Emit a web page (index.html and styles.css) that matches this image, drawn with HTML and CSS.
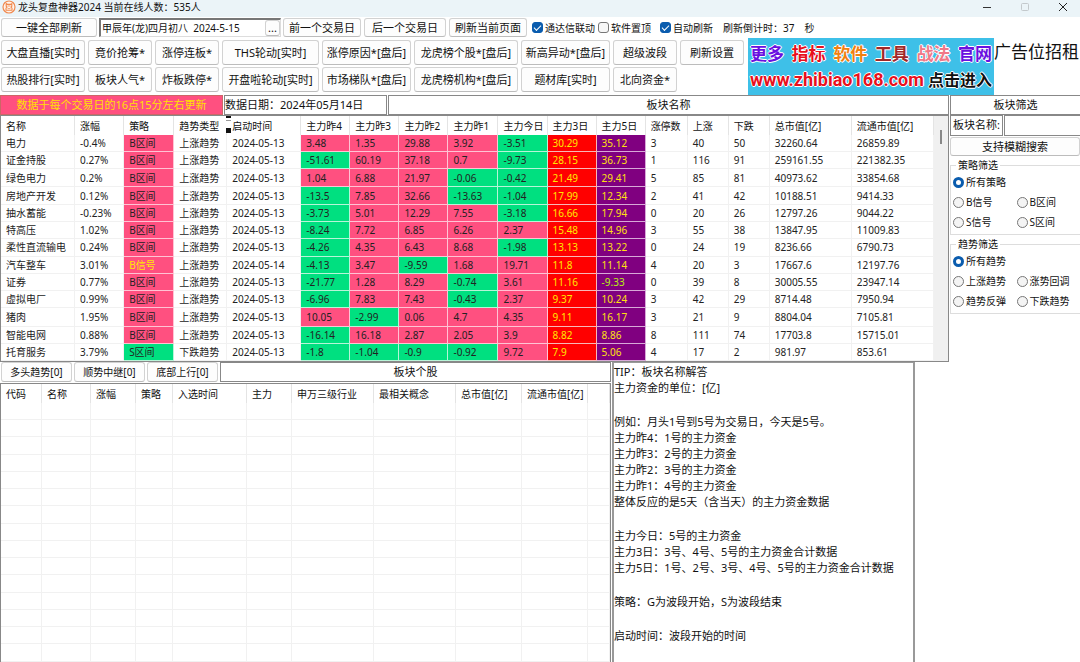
FILE: index.html
```html
<!DOCTYPE html>
<html lang="zh-CN">
<head>
<meta charset="utf-8">
<title>龙头复盘神器2024</title>
<link rel="stylesheet" href="styles.css">
</head>
<body>
<header class="titlebar">
  <svg class="logo" viewBox="0 0 14 14" aria-hidden="true"><circle cx="7" cy="7" r="6" fill="#fff3ea" stroke="#f08a50" stroke-width="1.2"/><path d="M4.2 3.6 5.6 4.4H8.4L9.8 3.6V6.2L9 7.2 10 8.2V10.2H4V8.2L5 7.2 4.2 6.2Z" fill="none" stroke="#f08a50" stroke-width="1.1"/><path d="M5.6 6H8.4M5.6 8.6H8.4" stroke="#f08a50" stroke-width=".8"/></svg>
  <h1>龙头复盘神器2024 当前在线人数：535人</h1>
  <div class="winctl">
    <button aria-label="最小化"><svg viewBox="0 0 10 10"><path d="M1 5.5H9" stroke="#333"/></svg></button>
    <button aria-label="最大化" disabled><svg viewBox="0 0 10 10"><rect x="1.5" y="1.5" width="7" height="7" rx="1" fill="none" stroke="#c3c9cc"/></svg></button>
    <button aria-label="关闭"><svg viewBox="0 0 10 10"><path d="M1 1 9 9M9 1 1 9" stroke="#222"/></svg></button>
  </div>
</header>

<section class="quick">
  <button class="btn w96">一键全部刷新</button>
  <div class="datebox"><input type="text" aria-label="日期" value="甲辰年(龙)四月初八  2024-5-15"><button class="btn" aria-label="选择日期">...</button></div>
  <button class="btn w78">前一个交易日</button>
  <button class="btn w82">后一个交易日</button>
  <button class="btn w78">刷新当前页面</button>
  <div class="checks">
    <label><input type="checkbox" checked>通达信联动</label>
    <label class="mid"><input type="checkbox">软件置顶</label>
    <label><input type="checkbox" checked>自动刷新</label>
    <span class="count">刷新倒计时：<b>37</b>秒</span>
  </div>
</section>

<section class="tools">
  <nav class="toolgrid">
    <button class="btn">大盘直播[实时]</button><button class="btn">竟价抢筹*</button><button class="btn">涨停连板*</button><button class="btn">THS轮动[实时]</button><button class="btn">涨停原因*[盘后]</button><button class="btn">龙虎榜个股*[盘后]</button><button class="btn">新高异动*[盘后]</button><button class="btn">超级波段</button><button class="btn">刷新设置</button>
    <button class="btn">热股排行[实时]</button><button class="btn">板块人气*</button><button class="btn">炸板跌停*</button><button class="btn">开盘啦轮动[实时]</button><button class="btn">市场梯队*[盘后]</button><button class="btn">龙虎榜机构*[盘后]</button><button class="btn">题材库[实时]</button><button class="btn">北向资金*</button>
  </nav>
  <a class="banner" href="#">
    <span class="words"><span class="c1">更多</span><span class="c2">指标</span><span class="c3">软件</span><span class="c4">工具</span><span class="c5">战法</span><span class="c1">官网</span></span>
    <span class="site"><span class="url">www.zhibiao168.com</span><span class="enter">点击进入</span></span>
  </a>
  <span class="ad">广告位招租</span>
</section>

<main class="upper">
  <div class="left">
    <div class="caption">
      <div class="notice">数据于每个交易日的16点15分左右更新</div>
      <div class="box date">数据日期：2024年05月14日</div>
      <h2 class="box grow">板块名称</h2>
    </div>
    <div class="scroller">
    <table class="grid sectors">
      <colgroup><col class="k74"><col class="k49"><col class="k50"><col class="k53"><col class="k74"><col class="k49"><col class="k49"><col class="k49"><col class="k50"><col class="k49"><col class="k49"><col class="k49"><col class="k42"><col class="k41"><col class="k41"><col class="k82"><col class="k82"></colgroup>
      <thead><tr><th>名称</th><th>涨幅</th><th>策略</th><th>趋势类型</th><th class="drag">启动时间</th><th>主力昨4</th><th>主力昨3</th><th>主力昨2</th><th>主力昨1</th><th>主力今日</th><th>主力3日</th><th>主力5日</th><th>涨停数</th><th>上涨</th><th>下跌</th><th>总市值[亿]</th><th>流通市值[亿]</th></tr></thead>
      <tbody>
      <tr><td>电力</td><td>-0.4%</td><td>B区间</td><td>上涨趋势</td><td>2024-05-13</td><td>3.48</td><td>1.35</td><td>29.88</td><td>3.92</td><td class="n">-3.51</td><td>30.29</td><td>35.12</td><td>3</td><td>40</td><td>50</td><td>32260.64</td><td>26859.89</td></tr>
      <tr><td>证金持股</td><td>0.27%</td><td>B区间</td><td>上涨趋势</td><td>2024-05-13</td><td class="n">-51.61</td><td>60.19</td><td>37.18</td><td>0.7</td><td class="n">-9.73</td><td>28.15</td><td>36.73</td><td>1</td><td>116</td><td>91</td><td>259161.55</td><td>221382.35</td></tr>
      <tr><td>绿色电力</td><td>0.2%</td><td>B区间</td><td>上涨趋势</td><td>2024-05-13</td><td>1.04</td><td>6.88</td><td>21.97</td><td class="n">-0.06</td><td class="n">-0.42</td><td>21.49</td><td>29.41</td><td>5</td><td>85</td><td>81</td><td>40973.62</td><td>33854.68</td></tr>
      <tr><td>房地产开发</td><td>0.12%</td><td>B区间</td><td>上涨趋势</td><td>2024-05-13</td><td class="n">-13.5</td><td>7.85</td><td>32.66</td><td class="n">-13.63</td><td class="n">-1.04</td><td>17.99</td><td>12.34</td><td>2</td><td>41</td><td>42</td><td>10188.51</td><td>9414.33</td></tr>
      <tr><td>抽水蓄能</td><td>-0.23%</td><td>B区间</td><td>上涨趋势</td><td>2024-05-13</td><td class="n">-3.73</td><td>5.01</td><td>12.29</td><td>7.55</td><td class="n">-3.18</td><td>16.66</td><td>17.94</td><td>0</td><td>20</td><td>26</td><td>12797.26</td><td>9044.22</td></tr>
      <tr><td>特高压</td><td>1.02%</td><td>B区间</td><td>上涨趋势</td><td>2024-05-13</td><td class="n">-8.24</td><td>7.72</td><td>6.85</td><td>6.26</td><td>2.37</td><td>15.48</td><td>14.96</td><td>3</td><td>55</td><td>38</td><td>13847.95</td><td>11009.83</td></tr>
      <tr><td>柔性直流输电</td><td>0.24%</td><td>B区间</td><td>上涨趋势</td><td>2024-05-13</td><td class="n">-4.26</td><td>4.35</td><td>6.43</td><td>8.68</td><td class="n">-1.98</td><td>13.13</td><td>13.22</td><td>0</td><td>24</td><td>19</td><td>8236.66</td><td>6790.73</td></tr>
      <tr><td>汽车整车</td><td>3.01%</td><td class="signal">B信号</td><td>上涨趋势</td><td>2024-05-14</td><td class="n">-4.13</td><td>3.47</td><td class="n">-9.59</td><td>1.68</td><td>19.71</td><td>11.8</td><td>11.14</td><td>4</td><td>20</td><td>3</td><td>17667.6</td><td>12197.76</td></tr>
      <tr><td>证券</td><td>0.77%</td><td>B区间</td><td>上涨趋势</td><td>2024-05-13</td><td class="n">-21.77</td><td>1.28</td><td>8.29</td><td class="n">-0.74</td><td>3.61</td><td>11.16</td><td class="lime">-9.33</td><td>0</td><td>39</td><td>8</td><td>30005.55</td><td>23947.14</td></tr>
      <tr><td>虚拟电厂</td><td>0.99%</td><td>B区间</td><td>上涨趋势</td><td>2024-05-13</td><td class="n">-6.96</td><td>7.83</td><td>7.43</td><td class="n">-0.43</td><td>2.37</td><td>9.37</td><td>10.24</td><td>3</td><td>42</td><td>29</td><td>8714.48</td><td>7950.94</td></tr>
      <tr><td>猪肉</td><td>1.95%</td><td>B区间</td><td>上涨趋势</td><td>2024-05-13</td><td>10.05</td><td class="n">-2.99</td><td>0.06</td><td>4.7</td><td>4.35</td><td>9.11</td><td>16.17</td><td>3</td><td>21</td><td>9</td><td>8804.04</td><td>7105.81</td></tr>
      <tr><td>智能电网</td><td>0.88%</td><td>B区间</td><td>上涨趋势</td><td>2024-05-13</td><td class="n">-16.14</td><td>16.18</td><td>2.87</td><td>2.05</td><td>3.9</td><td>8.82</td><td>8.86</td><td>8</td><td>111</td><td>74</td><td>17703.8</td><td>15715.01</td></tr>
      <tr><td>托育服务</td><td>3.79%</td><td class="n">S区间</td><td>下跌趋势</td><td>2024-05-13</td><td class="n">-1.8</td><td class="n">-1.04</td><td class="n">-0.9</td><td class="n">-0.92</td><td>9.72</td><td>7.9</td><td>5.06</td><td>4</td><td>17</td><td>2</td><td>981.97</td><td>853.61</td></tr>
      </tbody>
    </table>
    <div class="track"><span class="thumb"></span></div>
    </div>
  </div>
  <aside class="filters">
    <h2 class="box">板块筛选</h2>
    <div class="search"><label class="box" for="q">板块名称:</label><input id="q" type="text"></div>
    <button class="btn fuzzy">支持模糊搜索</button>
    <fieldset>
      <legend>策略筛选</legend>
      <label class="all"><input type="radio" name="s" checked>所有策略</label>
      <label><input type="radio" name="s">B信号</label><label><input type="radio" name="s">B区间</label>
      <label><input type="radio" name="s">S信号</label><label><input type="radio" name="s">S区间</label>
    </fieldset>
    <fieldset>
      <legend>趋势筛选</legend>
      <label class="all"><input type="radio" name="t" checked>所有趋势</label>
      <label><input type="radio" name="t">上涨趋势</label><label><input type="radio" name="t">涨势回调</label>
      <label><input type="radio" name="t">趋势反弹</label><label><input type="radio" name="t">下跌趋势</label>
    </fieldset>
  </aside>
</main>

<section class="lower">
  <div class="stocks">
    <div class="tabs"><button class="btn">多头趋势[0]</button><button class="btn">顺势中继[0]</button><button class="btn">底部上行[0]</button><h2 class="box grow">板块个股</h2></div>
    <div class="scroller">
    <table class="grid">
      <colgroup><col class="k41"><col class="k49"><col class="k45"><col class="k37"><col class="k74"><col class="k45"><col class="k82"><col class="k82"><col class="k66"><col class="k66"><col class="k22"></colgroup>
      <thead><tr><th>代码</th><th>名称</th><th>涨幅</th><th>策略</th><th>入选时间</th><th>主力</th><th>申万三级行业</th><th>最相关概念</th><th>总市值[亿]</th><th>流通市值[亿]</th><th></th></tr></thead>
      <tbody>
      <tr><td><td><td><td><td><td><td><td><td><td><td></tr>
      <tr><td><td><td><td><td><td><td><td><td><td><td></tr>
      <tr><td><td><td><td><td><td><td><td><td><td><td></tr>
      <tr><td><td><td><td><td><td><td><td><td><td><td></tr>
      <tr><td><td><td><td><td><td><td><td><td><td><td></tr>
      <tr><td><td><td><td><td><td><td><td><td><td><td></tr>
      <tr><td><td><td><td><td><td><td><td><td><td><td></tr>
      <tr><td><td><td><td><td><td><td><td><td><td><td></tr>
      <tr><td><td><td><td><td><td><td><td><td><td><td></tr>
      <tr><td><td><td><td><td><td><td><td><td><td><td></tr>
      <tr><td><td><td><td><td><td><td><td><td><td><td></tr>
      <tr><td><td><td><td><td><td><td><td><td><td><td></tr>
      <tr><td><td><td><td><td><td><td><td><td><td><td></tr>
      <tr><td><td><td><td><td><td><td><td><td><td><td></tr>
      <tr><td><td><td><td><td><td><td><td><td><td><td></tr>
      </tbody>
    </table>
    </div>
  </div>
  <article class="tip">
    <p>TIP：板块名称解答<br>主力资金的单位：[亿]</p>
    <p>例如：月头1号到5号为交易日，今天是5号。<br>主力昨4：1号的主力资金<br>主力昨3：2号的主力资金<br>主力昨2：3号的主力资金<br>主力昨1：4号的主力资金<br>整体反应的是5天（含当天）的主力资金数据</p>
    <p>主力今日：5号的主力资金<br>主力3日：3号、4号、5号的主力资金合计数据<br>主力5日：1号、2号、3号、4号、5号的主力资金合计数据</p>
    <p>策略：G为波段开始，S为波段结束</p>
    <p>启动时间：波段开始的时间</p>
  </article>
</section>
</body>
</html>
```
FILE: styles.css
```css
* { box-sizing: border-box; }
body {
  margin: 0;
  height: 100vh;
  overflow: hidden;
  display: flex;
  flex-direction: column;
  background: #fff;
  color: #111;
  font: 11px/16px "Noto Sans", "Noto Sans CJK SC", sans-serif;
}
button, input { font: inherit; color: inherit; margin: 0; }
h1, h2, p { margin: 0; font-size: inherit; font-weight: normal; }

.titlebar {
  display: flex;
  align-items: center;
  height: 17px;
  padding: 0 12px 3px 2px;
  background: #ebf4f8;
  font-size: 10px;
  line-height: 14px;
}
.logo { width: 14px; height: 14px; margin-right: 2px; }
.winctl { display: flex; gap: 28px; margin-left: auto; }
.winctl button { width: 10px; height: 10px; padding: 0; border: 0; background: none; display: flex; }
.winctl svg { width: 10px; height: 10px; }

.btn {
  padding: 0;
  border: 1px solid #d2d2d2;
  border-bottom-color: #bcbcbc;
  border-radius: 3px;
  background: #fdfdfd;
  white-space: nowrap;
  text-align: center;
}

.quick { display: flex; gap: 2px; height: 21px; padding: 1px 1px 1px; flex: none; }
.w96 { width: 96px; }
.w78 { width: 78px; }
.w82 { width: 82px; margin: 0 1px; }
.datebox {
  display: flex;
  width: 182px;
  border: 1px solid #777;
  border-width: 2px 1px 1px 2px;
  border-right-color: #ddd;
  border-bottom-color: #ddd;
}
.datebox input { flex: 1; min-width: 0; border: 0; padding: 0 1px; font-size: 10px; white-space: pre; background: none; }
.datebox .btn { width: 15px; line-height: 12px; }
.checks { display: flex; align-items: center; padding-left: 3px; font-size: 10px; }
.checks label { display: flex; align-items: center; gap: 2px; margin-right: 3px; }
.checks .mid { margin-right: 9px; }
.checks input {
  appearance: none;
  width: 11px;
  height: 11px;
  border: 1px solid #777;
  border-radius: 3px;
  background: #f7f7f7;
}
.checks input:checked {
  border-color: #0a5cae;
  background: #0a5cae;
  display: grid;
  place-items: center;
}
.checks input:checked::after {
  content: "";
  width: 6px;
  height: 3px;
  border: solid #fff;
  border-width: 0 0 1px 1px;
  rotate: -45deg;
  margin-bottom: 2px;
}
.count { margin-left: 7px; }
.count b { font-weight: normal; margin-right: 10px; }

.tools { display: flex; height: 57px; flex: none; }
.toolgrid {
  display: grid;
  grid-template-columns: 84px 64px 64px 97px 89px 104px 89px 64px 64px;
  grid-auto-rows: 25px;
  gap: 2px 3px;
  padding: 2px 2px 0 1px;
}
.banner {
  width: 246px;
  margin-left: 2px;
  background: #3ec0e8;
  font-weight: bold;
  text-decoration: none;
  text-shadow: 1px 0 #fff, -1px 0 #fff, 0 1px #fff, 0 -1px #fff;
  padding: 3px 2px 0;
  white-space: nowrap;
}
.words, .site { display: flex; justify-content: space-between; align-items: center; height: 26px; }
.words { font-size: 17px; }
.url { font-size: 18px; color: #e8101c; font-family: Roboto, "Open Sans", sans-serif; }
.enter { font-size: 16px; color: #111; }
.c1 { color: #6a10e0; }
.c2 { color: #e8101c; }
.c3 { color: #f08010; }
.c4 { color: #a02828; }
.c5 { color: #f07888; }
.ad { font: 17px/30px "Liberation Serif", "Noto Sans CJK SC", serif; white-space: nowrap; }

.upper { display: flex; flex: none; }
.left { flex: 1; min-width: 0; }
.box { border: 1px solid #888; text-align: center; white-space: nowrap; }
.grow { flex: 1; }
.caption { display: flex; gap: 1px; height: 20px; }
.caption > *, .filters > h2 { line-height: 18px; }
.notice { width: 223px; background: #ff5080; color: #ffe000; text-align: center; border: 1px solid #c66; }
.date { width: 163px; text-align: left; }

.scroller { display: flex; border: 1px solid #888; overflow: hidden; }
.left .scroller { height: 247px; }
.grid { flex: 1; table-layout: fixed; border-collapse: separate; border-spacing: 0; font-size: 10px; line-height: 14px; width: 0; color: #222; }
.grid th { height: 19px; padding: 0 0 0 5px; font-weight: normal; text-align: left; border-right: 1px solid #e4e4e4; white-space: nowrap; color: #111; }
.grid td { height: 17px; padding: 0 0 0 5px; border: solid #f1f1f1; border-width: 0 1px 1px 0; white-space: nowrap; }
.grid tr:nth-child(4n+3) td { height: 18px; }
.sectors td:nth-child(3), .sectors td:nth-child(n+6):nth-child(-n+10) { background: #ff5080; border-color: #ffc4d4; }
.sectors td.n:nth-child(n) { background: #00e080; border-color: #b8f4d8; }
.sectors td:nth-child(11) { background: #f00; color: #ffe800; border-color: #f8b8b8; }
.sectors td:nth-child(12) { background: #800080; color: #ffe010; border-color: #d8a8d8; }
.sectors td.signal { color: #ffe800; }
.sectors td.lime:nth-child(n) { color: #b8f010; }
.drag { position: relative; }
.drag::before {
  content: "";
  position: absolute;
  left: -1px;
  top: 0;
  width: 5px;
  height: 17px;
  background: linear-gradient(#111 2px, #fff 2px 4px, #999 4px 5px, #fff 5px 12px, #111 12px);
}
.k22 { width: 22px; } .k37 { width: 37px; } .k41 { width: 41px; } .k42 { width: 42px; } .k45 { width: 45px; }
.k49 { width: 49px; } .k50 { width: 50px; } .k53 { width: 53px; } .k66 { width: 66px; } .k74 { width: 74px; } .k82 { width: 82px; }
.track { width: 14px; background: #f0f0f0; padding-top: 14px; }
.thumb { display: block; width: 2px; height: 14px; margin: 0 auto; background: #888; }

.filters { width: 131px; padding-left: 1px; }
.filters > h2 { height: 20px; border-right: 0; }
.search { display: flex; gap: 1px; height: 21px; }
.search label { width: 53px; line-height: 18px; }
.search input { flex: 1; min-width: 0; border: 1px solid #888; border-right: 0; padding: 0 2px; }
.fuzzy { width: 100%; height: 19px; margin-top: 1px; }
.filters fieldset {
  display: grid;
  grid-template-columns: 1fr 1fr;
  grid-auto-rows: 20px;
  margin: 2px 0 0;
  padding: 0 0 2px 2px;
  border: 1px solid #ddd;
  border-right: 0;
  font-size: 10px;
}
.filters legend { padding: 0 2px; margin-left: 3px; line-height: 14px; }
.filters fieldset label { display: flex; align-items: center; gap: 2px; }
.all { grid-column: 1 / -1; }
.filters input[type=radio] {
  appearance: none;
  width: 11px;
  height: 11px;
  border: 1px solid #777;
  border-radius: 50%;
  background: #f4f4f4;
}
.filters input[type=radio]:checked { border: 3px solid #0a5cae; background: #fff; }

.lower { display: flex; flex: 1; min-height: 0; gap: 1px; }
.stocks { width: 611px; display: flex; flex-direction: column; }
.tabs { display: flex; gap: 2px; height: 21px; padding-left: 1px; }
.tabs .btn { width: 71px; height: 20px; font-size: 10px; }
.tabs h2 { height: 20px; line-height: 18px; }
.stocks .scroller { flex: 1; border-bottom: 0; }
.stocks .grid { align-self: flex-start; }
.tip { width: 303px; padding: 1px 1px 0 0; border: solid #999; border-width: 1px 2px 0 2px; white-space: nowrap; }
.tip p + p { margin-top: 18px; }
```
